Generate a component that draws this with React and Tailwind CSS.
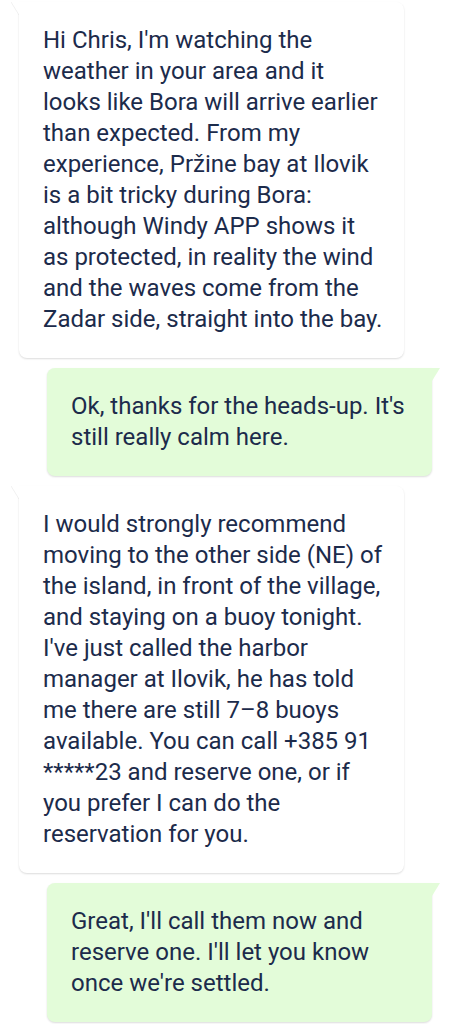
import React from "react";

const messages = [
  {
    from: "them",
    text: "Hi Chris, I'm watching the weather in your area and it looks like Bora will arrive earlier than expected. From my experience, Pržine bay at Ilovik is a bit tricky during Bora: although Windy APP shows it as protected, in reality the wind and the waves come from the Zadar side, straight into the bay.",
  },
  {
    from: "me",
    text: "Ok, thanks for the heads-up. It's still really calm here.",
  },
  {
    from: "them",
    text: "I would strongly recommend moving to the other side (NE) of the island, in front of the village, and staying on a buoy tonight. I've just called the harbor manager at Ilovik, he has told me there are still 7–8 buoys available. You can call +385 91 *****23 and reserve one, or if you prefer I can do the reservation for you.",
  },
  {
    from: "me",
    text: "Great, I'll call them now and reserve one. I'll let you know once we're settled.",
  },
];

const Bubble = ({ from, text }) => {
  const mine = from === "me";

  return (
    <div className={mine ? "flex justify-end pr-[30px]" : "flex justify-start pl-[19px]"}>
      <div
        className={
          mine
            ? "relative w-[385px] pl-6 pr-[18px] py-[23px] bg-[#e3fcd9] rounded-lg rounded-tr-none shadow-[0_1px_2px_rgba(0,0,0,0.14)]"
            : "relative w-[385px] pl-6 pr-[18px] py-[23px] bg-white rounded-lg rounded-tl-none shadow-[0_1px_2px_rgba(0,0,0,0.14)]"
        }
      >
        {mine ? (
          <svg
            className="absolute top-0 -right-[8px]"
            width="8"
            height="13"
            viewBox="0 0 8 13"
          >
            <path d="M0 0 H8 L0 13 Z" fill="#e3fcd9" />
          </svg>
        ) : (
          <svg
            className="absolute top-0 -left-[8px]"
            width="8"
            height="13"
            viewBox="0 0 8 13"
          >
            <path d="M8 0 H0 L8 13 Z" fill="#ffffff" />
            <path d="M0 0 L8 13" stroke="rgba(0,0,0,0.06)" strokeWidth="1" />
          </svg>
        )}
        <p className="text-[24px] leading-[31px] text-[#1c2b4b] font-['Roboto',sans-serif]">
          {text}
        </p>
      </div>
    </div>
  );
};

export default function App() {
  return (
    <div className="w-[462px] min-h-[1024px] bg-white pt-[2px] flex flex-col gap-[10px]">
      {messages.map((m, i) => (
        <Bubble key={i} from={m.from} text={m.text} />
      ))}
    </div>
  );
}
